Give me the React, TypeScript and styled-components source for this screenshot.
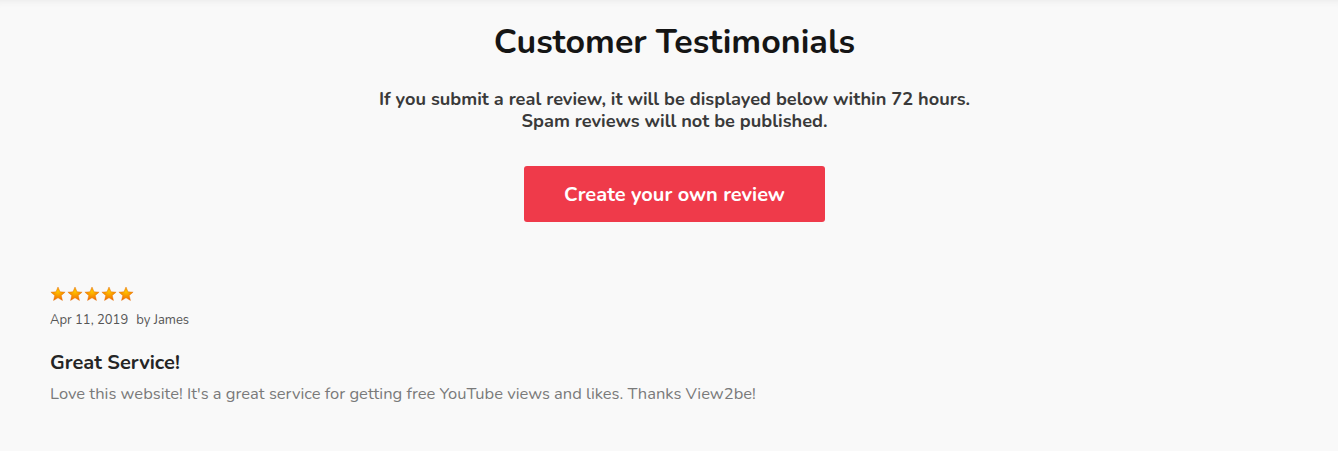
import React from "react";
import styled, { createGlobalStyle } from "styled-components";

const GlobalStyle = createGlobalStyle`
  html, body {
    margin: 0;
    padding: 0;
    background: #f9f9f9;
    font-family: "Nunito", Lato, "Open Sans", sans-serif;
  }
`;

const Page = styled.div`
  min-height: 451px;
  background: #f9f9f9;
  box-shadow: inset 0 8px 8px -8px rgba(0, 0, 0, 0.08);
  padding: 20px 50px 0;
  box-sizing: border-box;
`;

const Header = styled.section`
  display: flex;
  flex-direction: column;
  align-items: center;
  text-align: center;
  padding-left: 11px;
`;

const Title = styled.h2`
  margin: 0;
  font-size: 34px;
  line-height: 44px;
  font-weight: 700;
  color: #151515;
`;

const Subtitle = styled.p`
  margin: 24px 0 0;
  font-size: 18.2px;
  line-height: 22px;
  font-weight: 700;
  color: #3a3a3a;
`;

const ReviewButton = styled.button`
  margin-top: 34px;
  width: 301px;
  height: 56px;
  border: none;
  border-radius: 3px;
  background: #ef3a4a;
  color: #fff;
  font-family: inherit;
  font-size: 20px;
  font-weight: 700;
  cursor: pointer;
`;

const Review = styled.article`
  margin-top: 64px;
  display: flex;
  flex-direction: column;
`;

const Stars = styled.div`
  display: flex;
  gap: 1px;
  height: 18px;
`;

const Meta = styled.div`
  margin-top: 7px;
  font-size: 13px;
  color: #555;
  display: flex;
  gap: 8px;
`;

const ReviewTitle = styled.h3`
  margin: 20px 0 0;
  font-size: 20px;
  font-weight: 700;
  color: #252525;
`;

const ReviewBody = styled.p`
  margin: 6px 0 0;
  font-size: 16.5px;
  color: #7a7a7a;
`;

const Star = () => (
  <svg width="16" height="16" viewBox="0 0 24 24">
    <defs>
      <radialGradient id="starGrad" cx="0.5" cy="0.35" r="0.65">
        <stop offset="0" stopColor="#ffc400" />
        <stop offset="1" stopColor="#f26a00" />
      </radialGradient>
    </defs>
    <path
      d="M12 1.5l3.1 7.1 7.6.6-5.8 5 1.8 7.5L12 17.7l-6.7 4 1.8-7.5-5.8-5 7.6-.6z"
      fill="url(#starGrad)"
      stroke="#e06a00"
      strokeWidth="0.6"
    />
  </svg>
);

export default function App() {
  return (
    <>
      <GlobalStyle />
      <Page>
        <Header>
          <Title>Customer Testimonials</Title>
          <Subtitle>
            If you submit a real review, it will be displayed below within 72 hours.
            <br />
            Spam reviews will not be published.
          </Subtitle>
          <ReviewButton>Create your own review</ReviewButton>
        </Header>
        <Review>
          <Stars>
            {[0, 1, 2, 3, 4].map((i) => (
              <Star key={i} />
            ))}
          </Stars>
          <Meta>
            <span>Apr 11, 2019</span>
            <span>by James</span>
          </Meta>
          <ReviewTitle>Great Service!</ReviewTitle>
          <ReviewBody>
            Love this website! It's a great service for getting free YouTube views and likes. Thanks View2be!
          </ReviewBody>
        </Review>
      </Page>
    </>
  );
}
